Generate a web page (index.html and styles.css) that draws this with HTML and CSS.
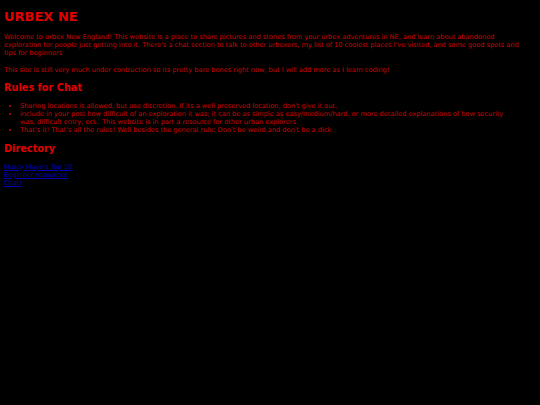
FILE: index.html
```html
<!DOCTYPE html>
<html>
<head>
<meta charset="utf-8">
<title>URBEX NE</title>
<link rel="stylesheet" href="styles.css">
</head>
<body class="page">
<h1 class="title">URBEX NE</h1>
<p class="text">Welcome to urbex New England! This website is a place to share pictures and stories from your urbex adventures in NE, and learn about abandoned exploration for people just getting into it. There's a chat section to talk to other urbexers, my list of 10 coolest places I've visited, and some good spots and tips for beginners</p>
<p class="text">This site is still very much under contruction so its pretty bare bones right now, but I will add more as I learn coding!</p>
<h2 class="heading">Rules for Chat</h2>
<ul class="rules">
<li>Sharing locations is allowed, but use discretion. If its a well preserved location, don't give it out.</li>
<li>include in your post how difficult of an exploration it was; it can be as simple as easy/medium/hard, or more detailed explanations of how security was, difficult entry, ect.. This website is in part a resource for other urban explorers.</li>
<li>That's it! That's all the rules! Well besides the general rule: Don't be weird and don't be a dick</li>
</ul>
<h2 class="heading">Directory</h2>
<p class="text links"><a href="#">Musty Mayo's Top 10</a><br><a href="#">Beginner resources</a><br><a href="#">Chat!</a></p>
</body>
</html>
```
FILE: styles.css
```css
html { background: #000; }
.page {
  margin: 0 21px 4px 4px;
  padding-top: 0.1px;
  background: #000;
  color: #d00000;
  font-family: "DejaVu Sans", Verdana, sans-serif;
  font-size: 6.6px;
  line-height: 8.1px;
}
.title {
  font-size: 13px;
  line-height: normal;
  margin: 9.3px 0 8.9px;
  color: #e00000;
}
.heading {
  font-size: 9.75px;
  line-height: normal;
  margin: 8.2px 0 9px;
  color: #e00000;
}
.text { margin: 0 0 8.2px; }
.rules { margin: 0 0 7.9px; padding-left: 16px; }
.links a { color: #0000b0; }
```
